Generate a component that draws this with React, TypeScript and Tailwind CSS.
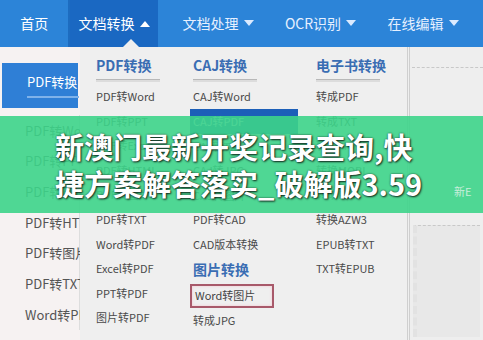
import React from "react";

const font = { fontFamily: '"Noto Sans CJK SC", "Noto Sans", sans-serif' };

const navItems = [
  { label: "文档处理", w: "w-[120px]" },
  { label: "OCR识别", w: "w-[85px]" },
  { label: "在线编辑", w: "w-[120px]" },
];

const sideItems = ["PDF转Word", "PDF转PPT", "PDF转Excel", "PDF转HTML", "PDF转图片", "PDF转TXT", "Word转PDF"];

const col1 = ["PDF转Word", "PDF转PPT", "PDF转Excel", "PDF转HTML", "PDF转图片", "PDF转TXT", "Word转PDF", "Excel转PDF", "PPT转PDF", "图片转PDF"];
const col3 = ["转成PDF", "转成TXT", "转换MOBI", "转换MOBI", "转成PDF", "转换AZW3", "EPUB转TXT", "TXT转EPUB"];

function Heading({ children }: { children: React.ReactNode }) {
  return (
    <div className="h-[33px] flex flex-col justify-end">
      <div className="text-[14px] font-bold text-[#3a6db3] leading-[20px]">{children}</div>
      <div className="mt-[4px] h-[3px] w-[64px] border-t border-[#b8b8b8] bg-[#dcdcdc]" />
    </div>
  );
}

function Item({ children }: { children: React.ReactNode }) {
  return <div className="h-[24.6px] flex items-center text-[11px] text-[#4a4a4a]">{children}</div>;
}

function Caret({ up }: { up?: boolean }) {
  return (
    <svg width="10" height="7" viewBox="0 0 10 7" className="ml-[5px]">
      {up ? <path d="M0 7 L5 1 L10 7 Z" fill="#fff" /> : <path d="M0 0 L10 0 L5 6 Z" fill="#dbeaff" />}
    </svg>
  );
}

export default function App() {
  return (
    <div className="relative w-[483px] h-[340px] overflow-hidden bg-[#eeeeee]" style={font}>
      {/* top nav */}
      <div className="flex h-[47px] bg-[#2c84d8] text-white text-[14px]">
        <div className="w-[78px] flex items-center justify-center">首页</div>
        <div className="w-[2px] bg-[#1d6cc0]" />
        <div className="w-[100px] flex items-center justify-center bg-[#1a68c2]">
          文档转换
          <Caret up />
        </div>
        {navItems.map((n) => (
          <div key={n.label} className={`${n.w} shrink-0 flex items-center justify-center text-[#e6f0ff]`}>
            {n.label}
            <Caret />
          </div>
        ))}
      </div>
      {/* notch */}
      <div className="absolute left-[123px] top-[39px] w-0 h-0 border-l-[8px] border-r-[8px] border-b-[8px] border-l-transparent border-r-transparent border-b-[#efefef]" />

      <div className="flex h-[293px]">
        {/* sidebar */}
        <div className="w-[80px] shrink-0 bg-[#f6f2f2] pt-[16px] overflow-hidden">
          <div className="ml-[2px] w-[76px] h-[45px] bg-[#2f7fd6] flex flex-col justify-center pl-[25px] text-white text-[13px]">
            <div className="whitespace-nowrap leading-[18px]">PDF转换</div>
            <div className="mt-[5px] h-[2px] w-[52px] bg-[#7fb2ea]" />
          </div>
          <div className="mt-[7px] pl-[25px] border-r border-[#ddd]">
            {sideItems.map((s) => (
              <div key={s} className="h-[30.7px] flex items-center text-[13px] text-[#555] whitespace-nowrap">
                {s}
              </div>
            ))}
          </div>
        </div>

        {/* dropdown */}
        <div className="w-[330px] shrink-0 bg-[#efefef] border-r-[3px] border-double border-[#cfcfcf] flex pt-[2px]">
          <div className="w-[113px] pl-[16px] shrink-0">
            <Heading>PDF转换</Heading>
            <div className="pt-[2px]">
              {col1.map((c, i) => (
                <Item key={i}>{c}</Item>
              ))}
            </div>
          </div>
          <div className="w-[123px] shrink-0">
            <Heading>CAJ转换</Heading>
            <div className="pt-[2px]">
              <Item>CAJ转Word</Item>
              <div className="-ml-[3px] w-[108px] h-[25px] bg-[#1c5fb8] pl-[3px] flex items-center text-[11px] text-[#cfe0f8]">CAJ转PDF</div>
              <Item>CAJ转TXT</Item>
              <Item>CAJ转JPG</Item>
              <Item>CAJ转图片</Item>
              <Item>PDF转CAD</Item>
              <Item>CAD版本转换</Item>
              <div className="h-[26px] flex items-center text-[14px] font-bold text-[#3a6db3]">图片转换</div>
              <div className="-ml-[3px] mt-[1px] w-[84px] h-[24px] flex items-center pl-[3px] border-2 border-[#a8596a] shadow-[inset_0_0_3px_#f3c6d0] text-[11px] text-[#444]">
                Word转图片
              </div>
              <Item>转成JPG</Item>
            </div>
          </div>
          <div className="flex-1">
            <Heading>电子书转换</Heading>
            <div className="pt-[2px]">
              {col3.map((c, i) => (
                <Item key={i}>{c}</Item>
              ))}
            </div>
          </div>
        </div>

        {/* right panel */}
        <div className="flex-1 flex flex-col pl-[2px]">
          <div className="mt-[20px] border-t border-dashed border-[#c8c8c8]" />
          <div className="mt-[157px] mr-[3px] ml-[1px] flex-1 mb-[3px] border-t border-dashed border-[#c8c8c8] border-l-[4px] border-l-[#e2e2e2] bg-[#e8e8e8]" />
        </div>
      </div>

      {/* overlay band */}
      <div className="absolute left-0 top-[116px] w-full h-[97px] bg-[#3dd48a]/90 pl-[55px] pt-[12px] text-white font-bold text-[29px] leading-[37px] [text-shadow:1px_1px_2px_rgba(0,0,0,0.75),0_0_2px_rgba(0,0,0,0.6)]">
        <div className="whitespace-nowrap">新澳门最新开奖记录查询,快</div>
        <div className="whitespace-nowrap">捷方案解答落实_破解版3.59</div>
        <div className="absolute left-[454px] top-[57px] text-[11px] font-normal text-[#c8eedb] [text-shadow:none]">新E</div>
      </div>
    </div>
  );
}
